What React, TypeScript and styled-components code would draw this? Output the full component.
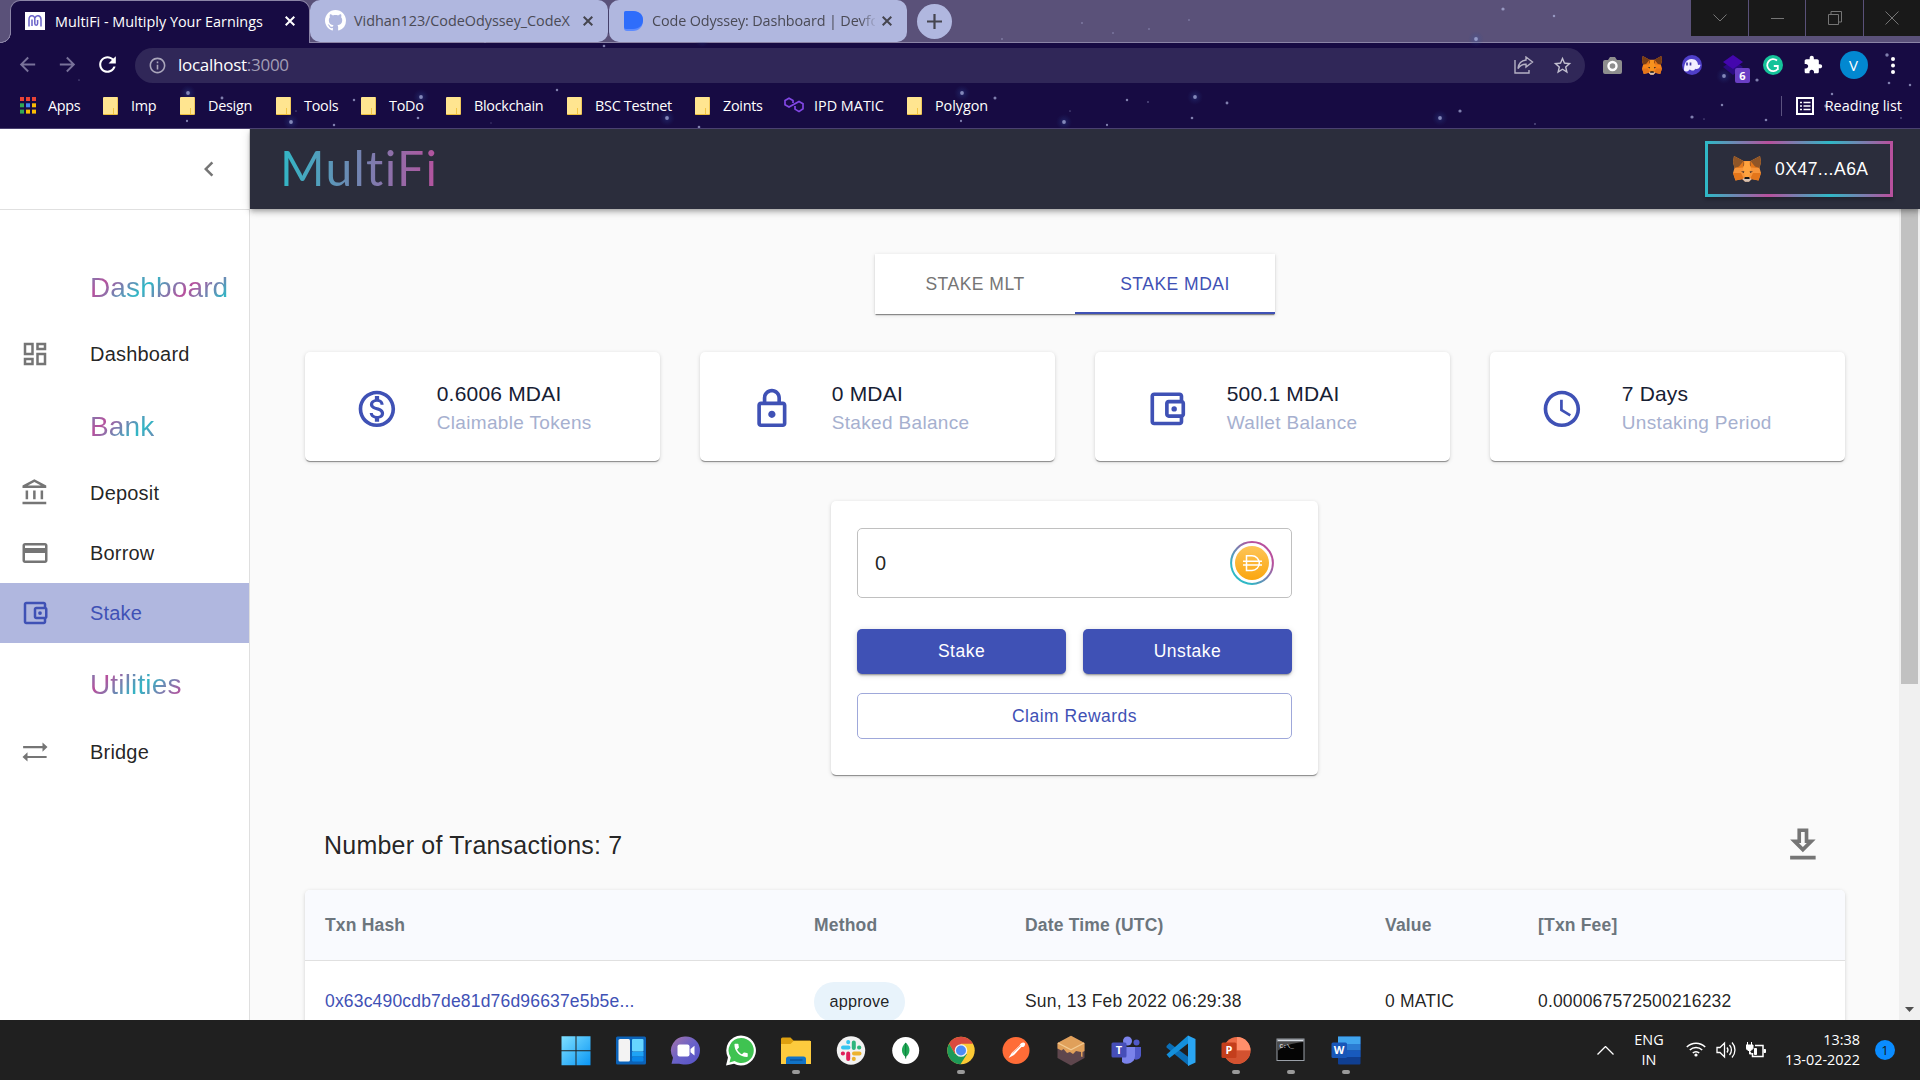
import React from "react";
import styled, { createGlobalStyle, css } from "styled-components";

const TEAL = "#2fb8c6";
const MAGENTA = "#b8509d";
const INDIGO = "#3f51b5";
const UI_FONT = `"Open Sans", "Noto Sans", sans-serif`;
const APP_FONT = `"Liberation Sans", Arial, sans-serif`;

const GlobalStyle = createGlobalStyle`
  * { box-sizing: border-box; }
  html, body { margin: 0; padding: 0; overflow: hidden; }
  body { font-family: ${APP_FONT}; }
  svg { display: block; flex: none; }
`;

const Screen = styled.div`
  width: 1920px;
  height: 1080px;
  display: flex;
  flex-direction: column;
  overflow: hidden;
  background: #fafafa;
`;

/* ---------- browser chrome ---------- */

const Browser = styled.header`
  position: relative;
  height: 129px;
  flex: none;
  display: flex;
  flex-direction: column;
  background: #170b43;
  border-bottom: 1px solid #4a4170;
  font-family: ${UI_FONT};
  color: #fff;
  isolation: isolate;
`;

const StarField = styled.svg`
  position: absolute;
  inset: 0;
  z-index: 0;
  pointer-events: none;
`;

const TabStrip = styled.div`
  height: 43px;
  display: flex;
  align-items: flex-start;
  background: #5a5179;
  border-bottom: 1px solid #8b84a6;
  padding-left: 10px;
`;

const BrowserTab = styled.div<{ $active?: boolean; $width: number }>`
  position: relative;
  z-index: ${(p) => (p.$active ? 2 : 1)};
  width: ${(p) => p.$width}px;
  height: ${(p) => (p.$active ? 43 : 42)}px;
  display: flex;
  align-items: center;
  padding: ${(p) => (p.$active ? "0 14px 2px 14px" : "0 15px 1px 15px")};
  border-radius: 10px 10px 0 0;
  font-size: 14.4px;
  ${(p) =>
    p.$active
      ? css`
          background: #170b43;
          border: 1px solid #8b84a6;
          border-bottom: 0;
          color: #fff;
        `
      : css`
          background: #b0b7df;
          color: #4a4a55;
          border-radius: 10px;
        `}
`;

const TabFoot = styled.span`
  position: absolute;
  left: -10px;
  bottom: 0;
  width: 10px;
  height: 10px;
  background: radial-gradient(circle at 0 0, transparent 8.5px, #8b84a6 9px, #8b84a6 9.6px, #170b43 10px);
`;

const TabTitle = styled.span<{ $spacing?: number; $fade?: boolean; $gap: number }>`
  flex: 1;
  min-width: 0;
  margin-left: ${(p) => p.$gap}px;
  white-space: nowrap;
  letter-spacing: ${(p) => p.$spacing ?? 0}px;
  ${(p) =>
    p.$fade &&
    css`
      mask-image: linear-gradient(90deg, #000 93%, transparent 101%);
      margin-right: 7px;
    `}
`;

const TabDivider = styled.i`
  width: 1px;
  height: 24px;
  margin: 10px 0 0;
  background: #45406a;
  position: relative;
  z-index: 2;
`;

const NewTab = styled.button`
  width: 35px;
  height: 35px;
  margin: 4px 0 0 10px;
  padding: 0;
  border: 0;
  border-radius: 50%;
  background: #b0b7df;
  display: grid;
  place-items: center;
`;

const WindowControls = styled.div`
  margin-left: auto;
  display: flex;
  gap: 1px;
  height: 36px;
  position: relative;
  z-index: 2;
`;

const WindowButton = styled.span<{ $width?: number }>`
  width: ${(p) => p.$width ?? 57}px;
  height: 36px;
  background: #191919;
  display: grid;
  place-items: center;
`;

const Toolbar = styled.div`
  height: 43px;
  display: flex;
  align-items: center;
  position: relative;
  z-index: 1;
  padding-top: 1px;
`;

const NavButtons = styled.div`
  width: 135px;
  padding: 0 0 1px 16px;
  display: flex;
  align-items: center;
  gap: 16.5px;
`;

const Omnibox = styled.div`
  width: 1450px;
  height: 35px;
  border-radius: 18px;
  background: #302758;
  display: flex;
  align-items: center;
  padding: 0 12px 0 13px;
`;

const Url = styled.span`
  margin-left: 11px;
  flex: 1;
  font-size: 17px;
  line-height: 22px;
  padding-bottom: 1px;
  letter-spacing: -0.27px;
  span { color: #a29db5; }
`;

const OmniboxActions = styled.span`
  display: flex;
  align-items: center;
  gap: 18px;
`;

const Extensions = styled.div`
  display: flex;
  align-items: center;
  margin-left: 11px;
`;

const ExtensionSlot = styled.span<{ $width?: number }>`
  width: ${(p) => p.$width ?? 40}px;
  height: 36px;
  position: relative;
  display: grid;
  place-items: center;
`;

const Badge = styled.b`
  position: absolute;
  left: 27px;
  top: 21px;
  width: 15px;
  height: 15px;
  border-radius: 2px;
  background: #6a3fc4;
  font-size: 11px;
  line-height: 15px;
  text-align: center;
`;

const Avatar = styled.span`
  width: 28px;
  height: 28px;
  border-radius: 50%;
  background: #0288d1;
  font-size: 15px;
  line-height: 28px;
  text-align: center;
`;

const Bookmarks = styled.div`
  flex: 1;
  display: flex;
  align-items: center;
  padding: 0 18px 3px 20px;
  position: relative;
  z-index: 1;
  font-size: 14.4px;
`;

const Bookmark = styled.span<{ $width: number; $spacing?: number; $gap?: number }>`
  width: ${(p) => p.$width}px;
  display: flex;
  align-items: center;
  gap: ${(p) => p.$gap ?? 13}px;
  white-space: nowrap;
  letter-spacing: ${(p) => p.$spacing ?? -0.28}px;
`;

const Folder = styled.i`
  width: 15px;
  height: 18px;
  flex: none;
  border-radius: 1px;
  background: linear-gradient(#f2c544, #f2c544) right 3px bottom 0 / 1px 6px no-repeat, #ffe590;
  border-bottom: 1px solid #eebf3c;
  border-right: 1px solid #f0c75a;
`;

const ReadingList = styled.span`
  margin-left: auto;
  display: flex;
  align-items: center;
  gap: 11px;
  padding-left: 14px;
  height: 20px;
  border-left: 1px solid #5b527f;
  letter-spacing: 0.02px;
`;

/* ---------- page ---------- */

const Page = styled.div`
  height: 891px;
  flex: none;
  display: flex;
  overflow: hidden;
`;

const Sidebar = styled.aside`
  width: 250px;
  flex: none;
  background: #fff;
  border-right: 1px solid #dfdfdf;
`;

const SidebarTop = styled.div`
  height: 81px;
  border-bottom: 1px solid #e0e0e0;
  display: flex;
  align-items: center;
  justify-content: flex-end;
  padding-right: 25px;
`;

const NavList = styled.nav`
  padding-top: 35px;
`;

const NavHeading = styled.h2<{ $top?: number }>`
  margin: 0;
  height: 79px;
  padding: ${(p) => p.$top ?? 26}px 0 0 90px;
  font-weight: 400;
  font-size: 28px;
  line-height: 33px;
  letter-spacing: 0.15px;
  span {
    display: inline-block;
    background: repeating-linear-gradient(135deg, ${TEAL} -14px, ${MAGENTA} 18px, ${TEAL} 50px);
    background-clip: text;
    -webkit-background-clip: text;
    color: transparent;
  }
`;

const NavItem = styled.a<{ $selected?: boolean }>`
  height: 60px;
  display: flex;
  align-items: center;
  gap: 40px;
  padding-left: 20px;
  font-size: 20px;
  letter-spacing: 0.19px;
  color: ${(p) => (p.$selected ? INDIGO : "rgba(0,0,0,0.87)")};
  background: ${(p) => (p.$selected ? "#b0b7df" : "transparent")};
  svg { color: ${(p) => (p.$selected ? INDIGO : "#757575")}; }
`;

const Content = styled.div`
  flex: 1;
  display: flex;
  flex-direction: column;
  min-width: 0;
`;

const AppBar = styled.div`
  position: relative;
  z-index: 2;
  height: 80px;
  flex: none;
  display: flex;
  align-items: center;
  justify-content: space-between;
  padding: 0 27px 0 30px;
  background: #2b2d3c;
  box-shadow: 0 2px 4px -1px rgba(0, 0, 0, 0.2), 0 4px 5px rgba(0, 0, 0, 0.14), 0 1px 10px rgba(0, 0, 0, 0.12);
`;

const Brand = styled.h1`
  margin: 0 0 2px -2px;
  padding: 0 3px 0 2px;
  font-family: Lato, sans-serif;
  font-weight: 400;
  font-size: 48px;
  line-height: 60px;
  letter-spacing: 1.3px;
  background: linear-gradient(90deg, ${TEAL}, ${MAGENTA});
  background-clip: text;
  -webkit-background-clip: text;
  color: transparent;
`;

const WalletButton = styled.button`
  width: 188px;
  height: 56px;
  padding: 0 0 0 25px;
  display: flex;
  align-items: center;
  gap: 14px;
  background: transparent;
  border: 3px solid;
  border-image: linear-gradient(90deg, ${TEAL}, ${MAGENTA}, ${TEAL}, ${MAGENTA}) 1;
  box-shadow: 0 3px 3px rgba(0, 0, 0, 0.2);
  color: #fff;
  font-family: ${APP_FONT};
  font-size: 17.5px;
  letter-spacing: 0.5px;
`;

const ScrollArea = styled.div`
  flex: 1;
  min-height: 0;
  display: flex;
`;

const Main = styled.main`
  flex: 1;
  padding: 45px 54px 0 55px;
  display: flex;
  flex-direction: column;
  background: #fafafa;
  overflow: hidden;
  > * { flex: none; }
`;

const Scrollbar = styled.div`
  width: 21px;
  background: #f0f0f0;
  display: flex;
  flex-direction: column;
  align-items: center;
  justify-content: space-between;
  padding-bottom: 8px;
`;

const Thumb = styled.i`
  width: 17px;
  height: 475px;
  background: #c1c1c1;
`;

const paper = css`
  background: #fff;
  box-shadow: 0 2px 1px -1px rgba(0, 0, 0, 0.3), 0 1px 1px rgba(0, 0, 0, 0.14), 0 1px 4px rgba(0, 0, 0, 0.14);
`;

const Tabs = styled.div`
  ${paper}
  width: 400px;
  height: 60px;
  align-self: center;
  display: flex;
`;

const StakeTab = styled.button<{ $active?: boolean }>`
  flex: 1;
  border: 0;
  border-bottom: ${(p) => (p.$active ? `2px solid ${INDIGO}` : "2px solid transparent")};
  background: none;
  padding: 2px 0 0;
  color: ${(p) => (p.$active ? INDIGO : "#757575")};
  font-family: ${APP_FONT};
  font-size: 17.5px;
  letter-spacing: 0.5px;
`;

const Stats = styled.div`
  margin-top: 38px;
  display: grid;
  grid-template-columns: repeat(4, 355px);
  gap: 40px;
`;

const StatCard = styled.section`
  ${paper}
  height: 109px;
  border-radius: 5px;
  display: flex;
  align-items: center;
  padding: 5px 0 0 49.5px;
  gap: 38.5px;
  color: ${INDIGO};
`;

const StatText = styled.div`
  display: flex;
  flex-direction: column;
  padding-bottom: 3px;
`;

const StatValue = styled.span`
  font-size: 21px;
  line-height: 30px;
  letter-spacing: 0.19px;
  color: #172033;
`;

const StatLabel = styled.span`
  font-size: 19px;
  line-height: 27px;
  letter-spacing: 0.33px;
  color: #a6b0cf;
`;

const StakeForm = styled.section`
  ${paper}
  width: 487px;
  height: 274px;
  margin: 40px 1px 0 0;
  align-self: center;
  border-radius: 5px;
  padding: 27px 26px 0;
  display: flex;
  flex-direction: column;
`;

const AmountField = styled.div`
  height: 70px;
  border: 1px solid #c0c0c0;
  border-radius: 5px;
  display: flex;
  align-items: center;
  justify-content: space-between;
  padding: 0 17px 1px;
  font-size: 20px;
  line-height: 22px;
  color: rgba(0, 0, 0, 0.87);
`;

const FormRow = styled.div`
  margin-top: 31px;
  display: grid;
  grid-template-columns: 1fr 1fr;
  column-gap: 17px;
`;

const FormButton = styled.button<{ $outlined?: boolean }>`
  padding: ${(p) => (p.$outlined ? "1px 0 0" : "0 0 1px")};
  border-radius: 5px;
  font-family: ${APP_FONT};
  font-size: 17.5px;
  letter-spacing: 0.5px;
  ${(p) =>
    p.$outlined
      ? css`
          margin-top: 19px;
          height: 46px;
          background: #fff;
          color: ${INDIGO};
          border: 1px solid #9fa8da;
        `
      : css`
          height: 45px;
          background: ${INDIGO};
          color: #fff;
          border: 0;
          box-shadow: 0 3px 1px -2px rgba(0, 0, 0, 0.2), 0 2px 2px rgba(0, 0, 0, 0.14), 0 1px 6px rgba(0, 0, 0, 0.14);
        `}
`;

const TransactionsHead = styled.div`
  height: 115px;
  display: flex;
  align-items: center;
  justify-content: space-between;
  padding: 25px 20px 0 19px;
  color: #757575;
`;

const TransactionsTitle = styled.h3`
  margin: 0;
  font-weight: 400;
  font-size: 25px;
  letter-spacing: 0.21px;
  color: rgba(0, 0, 0, 0.87);
`;

const Table = styled.div`
  ${paper}
  width: 1540px;
  border-radius: 5px 5px 0 0;
  overflow: hidden;
`;

const Row = styled.div<{ $head?: boolean }>`
  height: ${(p) => (p.$head ? 71 : 82)}px;
  display: grid;
  grid-template-columns: 489px 211px 360px 153px 1fr;
  align-items: center;
  padding-left: 20px;
  border-bottom: 1px solid #e0e0e0;
  font-size: 17.5px;
  letter-spacing: 0.18px;
  font-weight: ${(p) => (p.$head ? 700 : 400)};
  color: ${(p) => (p.$head ? "#6c757d" : "rgba(0,0,0,0.87)")};
  background: ${(p) => (p.$head ? "#f9fafe" : "#fff")};
`;

const Hash = styled.span`
  color: ${INDIGO};
`;

const Chip = styled.span`
  justify-self: start;
  height: 40px;
  width: 91px;
  display: grid;
  place-items: center;
  border-radius: 20px;
  background: #e8f3fb;
  font-size: 16.25px;
`;

/* ---------- taskbar ---------- */

const Taskbar = styled.footer`
  height: 60px;
  flex: none;
  display: flex;
  align-items: center;
  background: #202020;
  color: #fff;
  font-family: ${UI_FONT};
`;

const Apps = styled.div`
  display: flex;
  padding-left: 548px;
`;

const TaskButton = styled.span<{ $running?: boolean }>`
  width: 55px;
  height: 60px;
  display: flex;
  flex-direction: column;
  align-items: center;
  padding-top: 15px;
  gap: 3px;
  &::after {
    content: "";
    width: 8px;
    height: 4px;
    border-radius: 2px;
    background: ${(p) => (p.$running ? "#9a9a9a" : "transparent")};
  }
`;

const Tray = styled.div`
  margin-left: auto;
  display: flex;
  align-items: center;
  padding-right: 25px;
  font-size: 14.4px;
  line-height: 20px;
`;

const TrayText = styled.span<{ $align: string; $width: number }>`
  width: ${(p) => p.$width}px;
  text-align: ${(p) => p.$align};
  white-space: pre-line;
`;

const TrayIcons = styled.span`
  display: flex;
  gap: 10px;
  margin-left: 2px;
`;

const Notice = styled.span`
  width: 20px;
  height: 20px;
  border-radius: 50%;
  margin-left: 15px;
  background: #0a8cff;
  color: #101820;
  text-align: center;
  font-size: 13px;
`;

/* ---------- icons ---------- */

const Glyph = ({ d, size = 30, color = "currentColor", dot }: { d: string; size?: number; color?: string; dot?: boolean }) => (
  <svg width={size} height={size} viewBox="0 0 24 24" fill={color}>
    <path d={d} />
    {dot && <circle cx="16" cy="12" r="1.5" />}
  </svg>
);

const ICON = {
  chevronLeft: "M15.41 7.41L14 6l-6 6 6 6 1.41-1.41L10.83 12z",
  dashboard:
    "M19 5v2h-4V5h4M9 5v6H5V5h4m10 8v6h-4v-6h4M9 17v2H5v-2h4M21 3h-8v6h8V3zM11 3H3v10h8V3zm10 8h-8v10h8V11zm-10 4H3v6h8v-6z",
  bank: "M6.5 10h-2v7h2v-7zm6 0h-2v7h2v-7zm8.5 9H2v2h19v-2zm-2.5-9h-2v7h2v-7zm-7-6.74L16.71 6H6.29l5.21-2.74m0-2.26L2 6v2h19V6l-9.5-5z",
  card: "M20 4H4c-1.11 0-1.99.89-1.99 2L2 18c0 1.11.89 2 2 2h16c1.11 0 2-.89 2-2V6c0-1.11-.89-2-2-2zm0 14H4v-6h16v6zm0-10H4V6h16v2z",
  wallet:
    "M21 7.28V5c0-1.1-.9-2-2-2H5c-1.11 0-2 .9-2 2v14c0 1.1.89 2 2 2h14c1.1 0 2-.9 2-2v-2.28c.59-.35 1-.98 1-1.72V9c0-.74-.41-1.38-1-1.72zM20 9v6h-7V9h7zM5 19V5h14v2h-6c-1.1 0-2 .9-2 2v6c0 1.1.9 2 2 2h6v2H5z",
  bridge: "M2.5 7.2H18V4.3l4 3.7-4 3.8V8.9H2.5zM21.3 16.8H6v2.8l-4-3.7 4-3.7v2.9h15.3z",
  dollar:
    "M12 2C6.48 2 2 6.48 2 12s4.48 10 10 10 10-4.48 10-10S17.52 2 12 2zm0 18c-4.41 0-8-3.59-8-8s3.59-8 8-8 8 3.59 8 8-3.59 8-8 8zm.31-8.86c-1.77-.45-2.34-.94-2.34-1.67 0-.84.79-1.43 2.1-1.43 1.38 0 1.9.66 1.94 1.64h1.71c-.05-1.34-.87-2.57-2.49-2.97V5H10.9v1.69c-1.51.32-2.72 1.3-2.72 2.81 0 1.79 1.49 2.69 3.66 3.21 1.95.46 2.34 1.15 2.34 1.87 0 .53-.39 1.39-2.1 1.39-1.6 0-2.23-.72-2.32-1.64H8.04c.1 1.7 1.36 2.66 2.86 2.97V19h2.34v-1.67c1.52-.29 2.72-1.16 2.73-2.77-.01-2.2-1.9-2.96-3.66-3.42z",
  lock: "M18 8h-1V6c0-2.76-2.24-5-5-5S7 3.24 7 6v2H6c-1.1 0-2 .9-2 2v10c0 1.1.9 2 2 2h12c1.1 0 2-.9 2-2V10c0-1.1-.9-2-2-2zM9 6c0-1.66 1.34-3 3-3s3 1.34 3 3v2H9V6zm9 14H6V10h12v10zm-6-3c1.1 0 2-.9 2-2s-.9-2-2-2-2 .9-2 2 .9 2 2 2z",
  clock:
    "M11.99 2C6.47 2 2 6.48 2 12s4.47 10 9.99 10C17.52 22 22 17.52 22 12S17.52 2 11.99 2zM12 20c-4.42 0-8-3.58-8-8s3.58-8 8-8 8 3.58 8 8-3.58 8-8 8zm.5-13H11v6l5.25 3.15.75-1.23-4.5-2.67V7z",
  download: "M13 5v6h1.17L12 13.17 9.83 11H11V5h2m2-2H9v6H5l7 7 7-7h-4V3zm4 15H5v2h14v-2z",
  back: "M20 11H7.83l5.59-5.59L12 4l-8 8 8 8 1.41-1.41L7.83 13H20v-2z",
  forward: "M12 4l-1.41 1.41L16.17 11H4v2h12.17l-5.58 5.59L12 20l8-8z",
  reload:
    "M17.65 6.35C16.2 4.9 14.21 4 12 4c-4.42 0-7.99 3.58-7.99 8s3.57 8 7.99 8c3.73 0 6.84-2.55 7.73-6h-2.08c-.82 2.33-3.04 4-5.65 4-3.31 0-6-2.69-6-6s2.69-6 6-6c1.66 0 3.14.69 4.22 1.78L13 11h7V4l-2.35 2.35z",
  star: "M22 9.24l-7.19-.62L12 2 9.19 8.63 2 9.24l5.46 4.73L5.82 21 12 17.27 18.18 21l-1.63-7.03L22 9.24zM12 15.4l-3.76 2.27 1-4.28-3.32-2.88 4.38-.38L12 6.1l1.71 4.04 4.38.38-3.32 2.88 1 4.28L12 15.4z",
  info: "M11 7h2v2h-2zm0 4h2v6h-2zm1-9C6.48 2 2 6.48 2 12s4.48 10 10 10 10-4.48 10-10S17.52 2 12 2zm0 18c-4.41 0-8-3.59-8-8s3.59-8 8-8 8 3.59 8 8-3.59 8-8 8z",
  puzzle:
    "M20.5 11H19V7c0-1.1-.9-2-2-2h-4V3.5C13 2.12 11.88 1 10.5 1S8 2.12 8 3.5V5H4c-1.1 0-1.99.9-1.99 2v3.8H3.5c1.49 0 2.7 1.21 2.7 2.7s-1.21 2.7-2.7 2.7H2V20c0 1.1.9 2 2 2h3.8v-1.5c0-1.49 1.21-2.7 2.7-2.7 1.49 0 2.7 1.21 2.7 2.7V22H17c1.1 0 2-.9 2-2v-4h1.5c1.38 0 2.5-1.12 2.5-2.5S21.88 11 20.5 11z",
  phone:
    "M6.62 10.79c1.44 2.83 3.76 5.14 6.59 6.59l2.2-2.2c.27-.27.67-.36 1.02-.24 1.12.37 2.33.57 3.57.57.55 0 1 .45 1 1V20c0 .55-.45 1-1 1-9.39 0-17-7.61-17-17 0-.55.45-1 1-1h3.5c.55 0 1 .45 1 1 0 1.25.2 2.45.57 3.57.11.35.03.74-.25 1.02l-2.2 2.2z",
  github:
    "M8 0C3.58 0 0 3.58 0 8c0 3.54 2.29 6.53 5.47 7.59.4.07.55-.17.55-.38 0-.19-.01-.82-.01-1.49-2.01.37-2.53-.49-2.69-.94-.09-.23-.48-.94-.82-1.13-.28-.15-.68-.52-.01-.53.63-.01 1.08.58 1.23.82.72 1.21 1.87.87 2.33.66.07-.52.28-.87.51-1.07-1.78-.2-3.64-.89-3.64-3.95 0-.87.31-1.59.82-2.15-.08-.2-.36-1.02.08-2.12 0 0 .67-.21 2.2.82.64-.18 1.32-.27 2-.27.68 0 1.36.09 2 .27 1.53-1.04 2.2-.82 2.2-.82.44 1.1.16 1.92.08 2.12.51.56.82 1.27.82 2.15 0 3.07-1.87 3.75-3.65 3.95.29.25.54.73.54 1.48 0 1.07-.01 1.93-.01 2.2 0 .21.15.46.55.38A8.013 8.013 0 0016 8c0-4.42-3.58-8-8-8z",
};

const Close = ({ color }: { color: string }) => (
  <svg width="10" height="10" viewBox="0 0 10 10" stroke={color} strokeWidth="2">
    <path d="M.7.7l8.6 8.6M9.3.7L.7 9.3" />
  </svg>
);

const Fox = ({ width, height, soft }: { width: number; height: number; soft?: boolean }) => (
  <svg width={width} height={height} viewBox="0 0 28 26" preserveAspectRatio="none">
    <path d="M1 0l9.5 5h7L27 0l1 6-1.5 6L28 17l-2.5 7.5L19 23l-3 2.5h-4L9 23l-6.5 1.5L0 17l1.5-5L0 6z" fill={soft ? "#f6943a" : "#f6851b"} />
    <path d="M1 0l9.5 5 1.5 5-10.5 2L0 6zM27 0l-9.5 5L16 10l10.5 2L28 6z" fill={soft ? "#8f5527" : "#763d16"} />
    <path d="M10.5 5L6 10.500 2 12l8-.5zM17.500 5l4.500 5.500 4 1.500-8-.5z" fill="#e2761b" />
    <path d="M12 5.500h4l2 7.500-2 8h-4l-2-8z" fill={soft ? "#ffa33e" : "#f7931e"} />
    <path d="M0 17h8l3 6-2 .2-6.500 1.300zM28 17h-8l-3 6 2 .2 6.500 1.300z" fill="#e4761b" />
    <path d="M8 15.500l3.300-.3-.4 1.800zM20 15.500l-3.300-.3.4 1.800z" fill="#3a2c2a" />
    <path d="M9.500 23l1.500-1h6l1.500 1-2.500 2.700h-4z" fill="#d7c1b3" />
    <path d="M11.800 21h4.400l.5 2h-5.400z" fill="#161616" />
  </svg>
);

const DaiToken = () => (
  <svg width="44" height="44" viewBox="0 0 44 44">
    <defs>
      <linearGradient id="ring" x1="0.15" y1="0.85" x2="0.85" y2="0.15">
        <stop offset="0.1" stopColor={TEAL} />
        <stop offset="0.85" stopColor={MAGENTA} />
      </linearGradient>
      <linearGradient id="dai" x1="0" y1="0" x2="0" y2="1">
        <stop offset="0" stopColor="#fdc558" />
        <stop offset="1" stopColor="#fba60f" />
      </linearGradient>
    </defs>
    <circle cx="22" cy="22" r="20.9" fill="#fff" stroke="url(#ring)" strokeWidth="2" />
    <circle cx="22" cy="22" r="17" fill="url(#dai)" />
    <path d="M16.500 14.800h5.500a7.300 7.300 0 010 14.600h-5.500zM13 20.300h19M13 24h19" fill="none" stroke="#fff" strokeWidth="1.5" />
  </svg>
);

const STARS: [number, number, number][] = [
  [188, 93, 2], [222, 98, 1.5], [354, 100, 1.3], [421, 97, 2], [296, 111, 0.9], [291, 122, 2], [187, 121, 1.2], [418, 118, 1.4],
  [334, 125, 1.3], [557, 90, 1.3], [491, 123, 0.7], [79, 80, 0.9], [485, 41, 1.6], [604, 46, 1.4], [603, 25, 1.3], [615, 17, 1.8],
  [729, 9, 1.3], [763, 10, 0.9], [702, 39, 2], [1082, 23, 1.1], [1189, 20, 1], [1113, 33, 1], [1149, 29, 1], [1002, 39, 1.1],
  [667, 118, 2], [699, 127, 1.4], [962, 93, 2], [995, 98, 1.6], [961, 121, 1.2], [1064, 122, 2], [1070, 111, 0.9], [1107, 125, 1.2],
  [1127, 100, 1.3], [1148, 102, 1.1], [1195, 97, 2], [1192, 118, 1.4], [1227, 103, 1.5], [1503, 9, 1.7], [1554, 16, 1.3], [1476, 39, 2],
  [1440, 118, 2], [1460, 111, 1.7], [1535, 124, 1.1], [1724, 76, 2], [1757, 80, 1.7], [1722, 105, 1.3], [1692, 117, 1.7],
  [1704, 119, 0.9], [1766, 120, 1.4], [1832, 94, 1.3], [1887, 55, 1.8], [1889, 83, 1.4], [1910, 85, 1.3], [1901, 118, 1.1], [1826, 106, 1.8],
];

const Stars = () => (
  <StarField width="1920" height="128" viewBox="0 0 1920 128">
    <defs>
      <radialGradient id="glow">
        <stop offset="0" stopColor="#4468c0" stopOpacity="0.3" />
        <stop offset="1" stopColor="#20408a" stopOpacity="0" />
      </radialGradient>
    </defs>
    {STARS.map(([x, y, r]) => (
      <g key={`${x}-${y}`}>
        {r >= 2 && <circle cx={x} cy={y} r="8" fill="url(#glow)" />}
        <circle cx={x} cy={y} r={r * 0.95} fill="#b9bfe8" opacity={r < 1.2 ? 0.35 : 0.65} />
      </g>
    ))}
  </StarField>
);

const BOOKMARKS: [string, number][] = [
  ["Imp", 77],
  ["Design", 96],
  ["Tools", 85],
  ["ToDo", 85],
  ["Blockchain", 121],
  ["BSC Testnet", 128],
  ["Zoints", 89],
];

const AppsGrid = () => (
  <svg width="16" height="17" viewBox="0 0 16 17">
    {["#ea4335", "#ea4335", "#ea4335", "#34a853", "#4285f4", "#fbbc04", "#34a853", "#fbbc04", "#fbbc04"].map((c, i) => (
      <rect key={i} x={(i % 3) * 6} y={Math.floor(i / 3) * 6.3} width="4" height="4" fill={c} />
    ))}
  </svg>
);

const BrowserChrome = () => (
  <Browser>
    <TabStrip>
      <BrowserTab $active $width={300}>
        <TabFoot />
        <svg width="20" height="18" viewBox="0 0 20 18">
          <path fill="#fff" d="M0 0h20v18H0z" />
          <path d="M4 14.500V7.500C4 2.500 9.800 2.500 9.800 7v4.500c0 2.200 2.800 2.200 2.800 0V8M7 14V7.500M10 6c1-3.500 6-3 6 1.500v7" fill="none" stroke="#6a63c9" strokeWidth="1.5" />
        </svg>
        <TabTitle $gap={10}>MultiFi - Multiply Your Earnings</TabTitle>
        <Close color="#fff" />
      </BrowserTab>
      <BrowserTab $width={298}>
        <svg width="21" height="21" viewBox="0 0 16 16" fill="#fff"><path d={ICON.github} /></svg>
        <TabTitle $gap={8} $spacing={-0.03}>Vidhan123/CodeOdyssey_CodeX</TabTitle>
        <Close color="#45454f" />
      </BrowserTab>
      <TabDivider />
      <BrowserTab $width={298}>
        <svg width="19" height="20" viewBox="0 0 19 20">
          <path d="M0 2a2 2 0 012-2h7c6 0 10 3.500 10 9.500S15 20 9 20H3a3 3 0 01-3-3z" fill="#5d8bff" />
          <path d="M0 2a2 2 0 012-2h7c6 0 10 3.500 10 9S15 18 9 18H2a2 2 0 01-2-2z" fill="#2f6dfb" />
        </svg>
        <TabTitle $gap={9} $spacing={-0.13} $fade>Code Odyssey: Dashboard | Devfo</TabTitle>
        <Close color="#45454f" />
      </BrowserTab>
      <NewTab>
        <svg width="15" height="15" viewBox="0 0 15 15" stroke="#45454f" strokeWidth="2.2"><path d="M7.500 0v15M0 7.500h15" /></svg>
      </NewTab>
      <WindowControls>
        <WindowButton><svg width="14" height="8" viewBox="0 0 14 8" fill="none" stroke="#757575"><path d="M.5.5L7 7 13.500.5" /></svg></WindowButton>
        <WindowButton $width={56}><svg width="13" height="1" viewBox="0 0 13 1"><path fill="#757575" d="M0 0h13v1H0z" /></svg></WindowButton>
        <WindowButton><svg width="14" height="14" viewBox="0 0 14 14" fill="none" stroke="#757575"><path d="M.5 3.500h10v10H.5zM3 3V.5h10.500V11H11" /></svg></WindowButton>
        <WindowButton $width={56}><svg width="14" height="14" viewBox="0 0 14 14" fill="none" stroke="#757575"><path d="M.5.5l13 13M13.500.5l-13 13" /></svg></WindowButton>
      </WindowControls>
    </TabStrip>
    <Stars />
    <Toolbar>
      <NavButtons>
        <Glyph d={ICON.back} size={23} color="#79729a" />
        <Glyph d={ICON.forward} size={23} color="#79729a" />
        <Glyph d={ICON.reload} size={25} color="#fff" />
      </NavButtons>
      <Omnibox>
        <Glyph d={ICON.info} size={19} color="#aaa6bb" />
        <Url>localhost<span>:3000</span></Url>
        <OmniboxActions>
          <svg width="20" height="18" viewBox="0 0 20 18" fill="none" stroke="#b5b1c4" strokeWidth="1.4">
            <path d="M1 4v13h14v-3M12 1l6.500 5L12 11V8.200C8.500 8 6 9.500 4 12.500 4.500 8 7.500 4.500 12 4z" />
          </svg>
          <Glyph d={ICON.star} size={21} color="#c3c0d0" />
        </OmniboxActions>
      </Omnibox>
      <Extensions>
        <ExtensionSlot $width={32}>
          <svg width="19" height="17" viewBox="0 0 19 17"><path d="M2 3h3l2-3h5l2 3h3a2 2 0 012 2v10a2 2 0 01-2 2H2a2 2 0 01-2-2V5a2 2 0 012-2z" fill="#8e8e8e" /><circle cx="9.5" cy="9" r="4" fill="#8e8e8e" stroke="#fff" strokeWidth="2.4" /></svg>
        </ExtensionSlot>
        <ExtensionSlot $width={48}><Fox width={20} height={19} /></ExtensionSlot>
        <ExtensionSlot $width={32}>
          <svg width="20" height="20" viewBox="0 0 20 20"><circle cx="10" cy="10" r="10" fill="#4f3fc8" /><path d="M2 15.500C2 9 4 4 9.500 4c4.500 0 6.500 3 6.500 6 1 0 2-.5 2.500 0-1 4-3.500 4.500-5 3.800-2.500 3.500-5 .7-6 .7-1.500 2.500-4 2.500-5.500 1z" fill="#f2efff" /><path d="M5 7.500v3M8.500 7.500v3" stroke="#4338a8" strokeWidth="1.7" /></svg>
        </ExtensionSlot>
        <ExtensionSlot $width={49}>
          <svg width="20" height="20" viewBox="0 0 20 20"><path d="M10 5l10 7-10 8-10-8z" fill="#2a0a80" /><path d="M10 0l10 7-10 7L0 7z" fill="#4406ae" /></svg>
          <Badge>6</Badge>
        </ExtensionSlot>
        <ExtensionSlot $width={32}>
          <svg width="20" height="20" viewBox="0 0 20 20"><circle cx="10" cy="10" r="10" fill="#15c39a" /><path d="M14 5.500a6 6 0 10.8 8.500v-3h-4M14.800 11v4" fill="none" stroke="#fff" strokeWidth="1.8" /></svg>
        </ExtensionSlot>
        <ExtensionSlot $width={48}><Glyph d={ICON.puzzle} size={20} color="#fff" /></ExtensionSlot>
        <ExtensionSlot $width={33}><Avatar>V</Avatar></ExtensionSlot>
        <ExtensionSlot $width={46}>
          <svg width="4" height="17" viewBox="0 0 4 17" fill="#fff"><circle cx="2" cy="2" r="2" /><circle cx="2" cy="8.5" r="2" /><circle cx="2" cy="15" r="2" /></svg>
        </ExtensionSlot>
      </Extensions>
    </Toolbar>
    <Bookmarks>
      <Bookmark $width={83} $gap={12}><AppsGrid />Apps</Bookmark>
      {BOOKMARKS.map(([label, width]) => (
        <Bookmark key={label} $width={width}><Folder />{label}</Bookmark>
      ))}
      <Bookmark $width={123} $gap={10} $spacing={0}>
        <svg width="20" height="17" viewBox="0 0 20 17" fill="none" stroke="#8247e5" strokeWidth="1.7">
          <path d="M9 6V3.500L5 1.200 1 3.500v4.300l4 2.300 10-5.600 4 2.300v5l-4 2.800-4-2.500v-3" />
        </svg>
        IPD MATIC
      </Bookmark>
      <Bookmark $width={90} $spacing={-0.05}><Folder />Polygon</Bookmark>
      <ReadingList>
        <svg width="18" height="18" viewBox="0 0 18 18" fill="none" stroke="#fff"><rect x="1" y="1" width="16" height="16" strokeWidth="2" /><path d="M4 5.500h2M7.500 5.500h7M4 9h2M7.500 9h7M4 12.500h2M7.500 12.500h7" strokeWidth="1.6" /></svg>
        Reading list
      </ReadingList>
    </Bookmarks>
  </Browser>
);

const STATS = [
  { icon: ICON.dollar, value: "0.6006 MDAI", label: "Claimable Tokens" },
  { icon: ICON.lock, value: "0 MDAI", label: "Staked Balance" },
  { icon: ICON.wallet, value: "500.1 MDAI", label: "Wallet Balance", dot: true },
  { icon: ICON.clock, value: "7 Days", label: "Unstaking Period" },
];

/* ---------- taskbar icons ---------- */

const Tile = ({ children }: { children: React.ReactNode }) => (
  <svg width="32" height="32" viewBox="0 0 32 32">{children}</svg>
);

const letter = { fill: "#fff", fontFamily: UI_FONT, fontWeight: 700, fontSize: 11, textAnchor: "middle" as const };

const TASKS: { id: string; running?: boolean; art: React.ReactNode }[] = [
  {
    id: "start",
    art: (
      <>
        <linearGradient id="win" x1="0" y1="0" x2="1" y2="1"><stop stopColor="#7fe0ff" /><stop offset="1" stopColor="#0a96f5" /></linearGradient>
        <path d="M1.500 1.200h14v14h-14zM16.500 1.200h14v14h-14zM1.500 16.200h14v14h-14zM16.500 16.200h14v14h-14z" fill="url(#win)" />
      </>
    ),
  },
  {
    id: "widgets",
    art: (
      <>
        <rect x="1" y="1.5" width="30" height="28" rx="1.5" fill="#0b62b8" />
        <rect x="3.5" y="4" width="11.5" height="22.5" rx="1.5" fill="#f3f3f3" />
        <rect x="17" y="4" width="11.5" height="12.5" rx="1" fill="#67d5ff" />
        <rect x="17" y="17" width="11.5" height="4.5" fill="#1fa3f5" />
        <rect x="17" y="22" width="11.5" height="4.5" rx="1" fill="#0a86e8" />
      </>
    ),
  },
  {
    id: "chat",
    art: (
      <>
        <linearGradient id="chat" x1="0" y1="0" x2="1" y2="1"><stop stopColor="#a874a8" /><stop offset=".5" stopColor="#6a62c8" /><stop offset="1" stopColor="#5552c8" /></linearGradient>
        <path d="M16 1.500a14 14 0 110 28c-4 0-5-.5-7-.8H1.500l1.500-6A14 14 0 0116 1.500z" fill="url(#chat)" />
        <rect x="7.5" y="9.5" width="12" height="12" rx="2" fill="#fff" />
        <path d="M20.500 14l4-3.200v9.600l-4-3.200z" fill="#fff" />
      </>
    ),
  },
  {
    id: "whatsapp",
    art: (
      <>
        <path d="M16 .5a15 15 0 11-7 28.300L1 30.500l2-8A15 15 0 0116 .5z" fill="#fff" />
        <path d="M16 3a12.500 12.500 0 11-6.500 23L4.500 27.500l1.300-5A12.500 12.500 0 0116 3z" fill="#3fc351" />
        <g transform="translate(7.2 6.5) scale(.74)"><path d={ICON.phone} fill="#fff" /></g>
      </>
    ),
  },
  {
    id: "explorer",
    running: true,
    art: (
      <>
        <path d="M1 4a1.500 1.500 0 011.500-1.500h8l3 3H30v8H1z" fill="#dea010" />
        <path d="M1 9h9.500l3-3H31v23H1z" fill="#fdcb3e" />
        <path d="M6 29v-5a2.500 2.500 0 012.500-2.500h15A2.500 2.500 0 0126 24v5z" fill="#1173c7" />
        <path d="M10 25h12.500" stroke="#0a4f94" strokeWidth="1.3" />
      </>
    ),
  },
  {
    id: "slack",
    art: (
      <>
        <circle cx="16" cy="15.5" r="14.2" fill="#f2f2f2" />
        <g strokeWidth="4" strokeLinecap="round" fill="none">
          <path d="M8 12.500h5.500M13.200 7v.3" stroke="#36c5f0" />
          <path d="M18.800 7.500v5.500M24.300 12.500h-.3" stroke="#2eb67d" />
          <path d="M19 18.500h5.500M18.800 23.800v.2" stroke="#ecb22e" />
          <path d="M13.200 18.500V24M7.800 18.500h.2" stroke="#e01e5a" />
        </g>
      </>
    ),
  },
  {
    id: "mongodb",
    art: (
      <>
        <circle cx="15.7" cy="15.5" r="13.5" fill="#fff" />
        <path d="M15.700 7.500c5.500 5 4.500 11.500 0 14.500-4.500-3-5.500-9.500 0-14.500z" fill="#1fa856" />
        <path d="M15.700 8v15.500" stroke="#0f7a3c" strokeWidth="1" />
      </>
    ),
  },
  {
    id: "chrome",
    running: true,
    art: (
      <>
        <circle cx="16" cy="15.5" r="13.7" fill="#fbc934" />
        <path d="M4.100 8.650A13.700 13.700 0 0127.900 8.650H16L10 19z" fill="#d94a3e" />
        <path d="M4.100 8.650A13.700 13.700 0 0015.500 29.200L22 19H10z" fill="#1d9a58" />
        <circle cx="16" cy="15.5" r="6.3" fill="#f1f1f1" />
        <circle cx="16" cy="15.5" r="5" fill="#4c8bf5" />
      </>
    ),
  },
  {
    id: "postman",
    art: (
      <>
        <circle cx="16" cy="15.5" r="13.5" fill="#ff6c37" />
        <path d="M8.500 23l3.500-5.500 7.500-7c1-3 4.500-4 5.500-2 .5 2.500-2 4-3.500 3.500L14 20z" fill="#fff" />
        <path d="M12.500 18l8-7.500" stroke="#ff8c62" strokeWidth=".8" />
      </>
    ),
  },
  {
    id: "ganache",
    art: (
      <>
        <path d="M2.500 8L16 .8 29.500 8v15L16 30.500 2.500 23z" fill="#5e464d" />
        <path d="M2.500 8L16 .8 29.500 8v8l-2 1v5l-1.500-.5V17l-5-1-3 3-3-2-3 1-3.500-4-2 1.500-4-2z" fill="#e0a05a" />
        <path d="M3 8l13 6.800L29 8" fill="none" stroke="#f3cb92" strokeWidth="1.3" />
      </>
    ),
  },
  {
    id: "teams",
    art: (
      <>
        <circle cx="26.5" cy="7.5" r="3" fill="#5059c9" />
        <circle cx="17.5" cy="6" r="4.5" fill="#7b83eb" />
        <path d="M22 12h9v8.500a5 5 0 01-9 2z" fill="#5059c9" />
        <path d="M12 12h13v9a8 8 0 01-13 6z" fill="#7b83eb" />
        <rect x="1.5" y="7.5" width="15" height="15" rx="1.5" fill="#464eb8" />
        <text x="9" y="19" {...letter}>T</text>
      </>
    ),
  },
  {
    id: "vscode",
    art: (
      <>
        <path d="M1.500 11l3-3L24 22.500V31L1.500 12.500z" fill="#0a6fb8" />
        <path d="M1.500 19.500L23 .5v8L4.500 23z" fill="#1490dc" />
        <path d="M23 .5L30.500 4v23.500L23 31z" fill="#2aa5f2" />
      </>
    ),
  },
  {
    id: "powerpoint",
    running: true,
    art: (
      <>
        <circle cx="17" cy="15.5" r="13.5" fill="#ed6c47" />
        <path d="M17 2A13.500 13.500 0 0130.500 15.500H17z" fill="#ff8f6b" />
        <path d="M3.500 15.500a13.500 13.500 0 0027 0z" fill="#d35230" />
        <rect x="1.5" y="7.5" width="15" height="15.5" rx="1.5" fill="#c43e1c" />
        <text x="9" y="19.2" {...letter}>P</text>
      </>
    ),
  },
  {
    id: "terminal",
    running: true,
    art: (
      <>
        <rect x="2" y="4" width="27" height="21.5" fill="#050505" stroke="#9aa0a8" />
        <path d="M2.500 4.500h26v2h-26z" fill="#d6dbe2" />
        <path d="M2.500 7h26c-12 1-20 4-26 9z" fill="#4b4b4b" />
        <text x="4.5" y="12.5" fill="#fff" fontFamily="Liberation Mono" fontSize="6">C:\_</text>
      </>
    ),
  },
  {
    id: "word",
    running: true,
    art: (
      <>
        <rect x="8" y="1.5" width="22.5" height="28" rx="1" fill="#103f91" />
        <path d="M8 1.500h22.500v7.500H8z" fill="#41a5ee" />
        <path d="M8 9h22.500v6.500H8z" fill="#2b7cd3" />
        <path d="M8 15.500h22.500V22H8z" fill="#185abd" />
        <rect x="1.5" y="7.5" width="15.5" height="15.5" rx="1.5" fill="#1857b8" />
        <text x="9" y="19.2" {...letter}>W</text>
      </>
    ),
  },
];

const SystemTaskbar = () => (
  <Taskbar>
    <Apps>
      {TASKS.map((t) => (
        <TaskButton key={t.id} $running={t.running}><Tile>{t.art}</Tile></TaskButton>
      ))}
    </Apps>
    <Tray>
      <svg width="17" height="9" viewBox="0 0 17 9" fill="none" stroke="#fff" strokeWidth="1.3"><path d="M.5 8.500l8-8 8 8" /></svg>
      <TrayText $align="center" $width={70}>{"ENG\nIN"}</TrayText>
      <TrayIcons>
        <svg width="20" height="16" viewBox="0 0 20 16" fill="none" stroke="#fff" strokeWidth="1.5"><path d="M.8 6a13 13 0 0118.400 0M3.800 9a8.800 8.800 0 0112.400 0M6.800 12a4.500 4.500 0 016.400 0" /><circle cx="10" cy="14" r="1.6" fill="#fff" stroke="none" /></svg>
        <svg width="20" height="18" viewBox="0 0 20 18" fill="none" stroke="#fff" strokeWidth="1.3"><path d="M1 6.500h3L8.500 2v14L4 11.500H1zM11 6.500a4 4 0 010 5M13.500 4a7.500 7.500 0 010 10M16 1.500a11 11 0 010 15" /></svg>
        <svg width="20" height="18" viewBox="0 0 20 18" fill="none" stroke="#fff" strokeWidth="1.5"><path d="M9 4.500h8v11H6.500V12" /><path d="M18 8.500h1.500v3H18zM8.500 13.500v-6h2v6z" fill="#fff" strokeWidth="1" /><path d="M0 4h7v3.500L5 9.500H2L0 7.500zM1.500 1v3M5.500 1v3M3.500 9v4H6" fill="#fff" strokeWidth="1" /></svg>
      </TrayIcons>
      <TrayText $align="right" $width={94}>{"13:38\n13-02-2022"}</TrayText>
      <Notice>1</Notice>
    </Tray>
  </Taskbar>
);

export default function App() {
  return (
    <Screen>
      <GlobalStyle />
      <BrowserChrome />
      <Page>
        <Sidebar>
          <SidebarTop><Glyph d={ICON.chevronLeft} color="#757575" /></SidebarTop>
          <NavList>
            <NavHeading><span>Dashboard</span></NavHeading>
            <NavItem><Glyph d={ICON.dashboard} />Dashboard</NavItem>
            <NavHeading><span>Bank</span></NavHeading>
            <NavItem><Glyph d={ICON.bank} />Deposit</NavItem>
            <NavItem><Glyph d={ICON.card} />Borrow</NavItem>
            <NavItem $selected><Glyph d={ICON.wallet} dot />Stake</NavItem>
            <NavHeading $top={25}><span>Utilities</span></NavHeading>
            <NavItem><Glyph d={ICON.bridge} />Bridge</NavItem>
          </NavList>
        </Sidebar>
        <Content>
          <AppBar>
            <Brand>MultiFi</Brand>
            <WalletButton><Fox width={28} height={26} soft />0X47...A6A</WalletButton>
          </AppBar>
          <ScrollArea>
            <Main>
              <Tabs>
                <StakeTab>STAKE MLT</StakeTab>
                <StakeTab $active>STAKE MDAI</StakeTab>
              </Tabs>
              <Stats>
                {STATS.map((s) => (
                  <StatCard key={s.label}>
                    <Glyph d={s.icon} size={43.75} dot={s.dot} />
                    <StatText>
                      <StatValue>{s.value}</StatValue>
                      <StatLabel>{s.label}</StatLabel>
                    </StatText>
                  </StatCard>
                ))}
              </Stats>
              <StakeForm>
                <AmountField>0<DaiToken /></AmountField>
                <FormRow>
                  <FormButton>Stake</FormButton>
                  <FormButton>Unstake</FormButton>
                </FormRow>
                <FormButton $outlined>Claim Rewards</FormButton>
              </StakeForm>
              <TransactionsHead>
                <TransactionsTitle>Number of Transactions: 7</TransactionsTitle>
                <Glyph d={ICON.download} size={43.75} />
              </TransactionsHead>
              <Table>
                <Row $head>
                  <span>Txn Hash</span>
                  <span>Method</span>
                  <span>Date Time (UTC)</span>
                  <span>Value</span>
                  <span>[Txn Fee]</span>
                </Row>
                <Row>
                  <Hash>0x63c490cdb7de81d76d96637e5b5e...</Hash>
                  <Chip>approve</Chip>
                  <span>Sun, 13 Feb 2022 06:29:38</span>
                  <span>0 MATIC</span>
                  <span>0.000067572500216232</span>
                </Row>
              </Table>
            </Main>
            <Scrollbar>
              <Thumb />
              <svg width="9" height="5" viewBox="0 0 9 5"><path d="M0 0h9L4.500 5z" fill="#505050" /></svg>
            </Scrollbar>
          </ScrollArea>
        </Content>
      </Page>
      <SystemTaskbar />
    </Screen>
  );
}
